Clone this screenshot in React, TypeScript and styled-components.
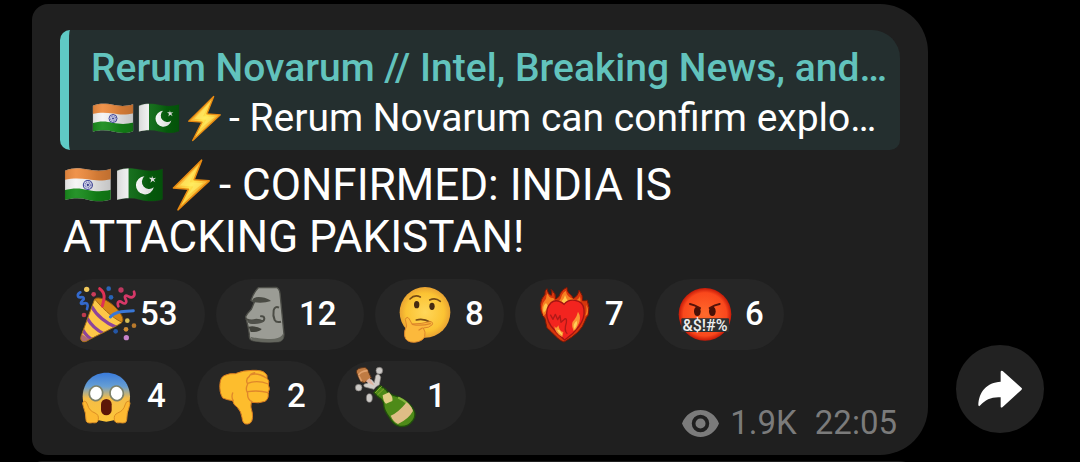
import React from "react";
import styled, { createGlobalStyle } from "styled-components";

const GlobalStyle = createGlobalStyle`
  * { box-sizing: border-box; }
  body {
    margin: 0;
    background: #000;
    color: #fff;
    font-family: Roboto, "Noto Sans", sans-serif;
  }
`;

const Chat = styled.main`
  height: 100vh;
  overflow: hidden;
  display: flex;
  flex-direction: column;
  gap: 6px;
  padding: 4px 36px 0 32px;
`;

const MessageRow = styled.div`
  display: flex;
  align-items: flex-end;
  gap: 28px;
  flex: none;
`;

const Bubble = styled.article`
  flex: 1;
  min-width: 0;
  padding: 26px 28px 23px;
  border-radius: 16px 48px 48px 16px;
  background: #1f1f1f;
`;

const NextBubble = styled.div`
  flex: none;
  height: 60px;
  margin-right: 116px;
  border-radius: 16px 48px 48px 16px;
  background: #1f1f1f;
`;

const Reply = styled.blockquote`
  margin: 0;
  padding: 13px 8px 7px 22px;
  border-left: 9px solid #5fcac5;
  border-radius: 10px 28px 10px 10px;
  background: #242f2f;
  line-height: 50px;
  font-size: 39px;
  white-space: nowrap;
`;

const ReplyTitle = styled.div`
  color: #62c3bd;
  font-weight: 500;
`;

const ReplyText = styled.div`
  display: flex;
  align-items: center;
`;

const Body = styled.p`
  margin: 9px 0 16px;
  padding-left: 3px;
  font-size: 44px;
  line-height: 52px;
`;

const TextEmoji = styled.svg<{ $size: number }>`
  width: ${(p) => p.$size}px;
  height: 1em;
  overflow: visible;
  vertical-align: -7px;
`;

const Reactions = styled.div`
  display: flex;
  flex-wrap: wrap;
  gap: 11px;
  margin-left: -3px;
`;

const Reaction = styled.button<{ $wide?: boolean }>`
  display: flex;
  align-items: center;
  gap: ${(p) => (p.$wide ? 4 : 11)}px;
  height: 71px;
  min-width: ${(p) => (p.$wide ? 148 : 129)}px;
  padding: 0 ${(p) => (p.$wide ? 26 : 19)}px 0 19px;
  border: 0;
  border-radius: 36px;
  background: #262626;
  color: #fff;
  font: 500 33px/38px Roboto, "Noto Sans", sans-serif;
`;

const ReactionIcon = styled.svg`
  width: 60px;
  height: 60px;
  overflow: visible;
`;

const Count = styled.span`
  padding-bottom: 2px;
`;

const Meta = styled.div`
  display: flex;
  align-items: center;
  align-self: flex-end;
  margin: 0 3px -10px auto;
  color: #7b7b7b;
  font-size: 33px;
  line-height: 38px;
`;

const EyeIcon = styled.svg`
  width: 37px;
  height: 27px;
  margin-right: 11px;
`;

const Time = styled.time`
  margin-left: 18px;
`;

const ShareButton = styled.button`
  display: grid;
  place-items: center;
  width: 88px;
  height: 88px;
  margin-bottom: 22px;
  padding: 0;
  border: 0;
  border-radius: 50%;
  background: #222;
`;

const FLAG = "M5 31C30 21 46 24 66 28S106 33 127 26V107C106 115 86 113 66 108S26 103 5 109Z";

function Flags({ size, id }: { size: number; id: string }) {
  return (
    <>
      <TextEmoji $size={size} viewBox="0 12 138 114" role="img" aria-label="Flag of India">
        <defs>
          <clipPath id={`flag-${id}`}>
            <path d={FLAG} />
          </clipPath>
          <linearGradient id={`wave-${id}`}>
            <stop offset="0" stopColor="#000" stopOpacity=".12" />
            <stop offset=".25" stopColor="#fff" stopOpacity=".08" />
            <stop offset=".65" stopColor="#000" stopOpacity=".12" />
            <stop offset="1" stopColor="#000" stopOpacity=".22" />
          </linearGradient>
        </defs>
        <g clipPath={`url(#flag-${id})`}>
          <path fill="#f4f4f4" d="M0 0h138v138H0z" />
          <path fill="#ee8a3c" d="M0 0H138V51C106 60 86 57 66 54S26 50 0 56Z" />
          <path fill="#148a18" d="M0 84C30 75 46 78 66 82S106 88 138 79V138H0Z" />
          <circle cx="66" cy="69" r="12" fill="#eceefb" stroke="#3a3f9c" strokeWidth="3" />
          <circle cx="66" cy="69" r="7" fill="none" stroke="#6a6eb8" strokeWidth="5" strokeDasharray="2 2" />
          <circle cx="66" cy="69" r="3" fill="#30358f" />
          <path fill={`url(#wave-${id})`} d="M0 0h138v138H0z" />
        </g>
        <path d={FLAG} fill="none" stroke="#333" strokeOpacity=".3" strokeWidth="2" />
      </TextEmoji>
      <TextEmoji $size={size} viewBox="0 12 138 114" role="img" aria-label="Flag of Pakistan">
        <g clipPath={`url(#flag-${id})`}>
          <path fill="#05650c" d="M0 0h138v138H0z" />
          <path fill="#efefef" d="M0 0h36v138H0z" />
          <path fill="#fff" d="M78 46A24 24 0 1 0 103 75A19 19 0 1 1 78 46Z" />
          <path fill="#fff" d="M98 44l3 7 8-1-6 5 4 7-7-4-6 5 2-8-6-5 8 0Z" />
          <path fill={`url(#wave-${id})`} d="M0 0h138v138H0z" />
        </g>
        <path d={FLAG} fill="none" stroke="#333" strokeOpacity=".3" strokeWidth="2" />
      </TextEmoji>
      <TextEmoji $size={size} viewBox="0 12 138 114" role="img" aria-label="Lightning">
        <defs>
          <linearGradient id={`bolt-${id}`} x1="0" y1="0" x2="1" y2="1">
            <stop offset=".2" stopColor="#f79a24" />
            <stop offset=".5" stopColor="#ffe54e" />
            <stop offset=".85" stopColor="#f28a16" />
          </linearGradient>
        </defs>
        <path
          d="M92 3L17 77L57 80L29 135L112 58L72 55Z"
          fill={`url(#bolt-${id})`}
          stroke="#e88a12"
          strokeWidth="4"
          strokeLinejoin="round"
        />
        <path d="M80 22L34 70L70 73L53 99L96 64L60 62Z" fill="#fff06a" opacity=".6" />
      </TextEmoji>
    </>
  );
}

function Party() {
  return (
    <ReactionIcon viewBox="78 42 180 180" aria-hidden="true">
      <defs>
        <clipPath id="cone">
          <path d="M134 84C152 106 184 139 216 154C199 168 145 190 109 211C98 215 89 208 93 196Z" />
        </clipPath>
      </defs>
      <path d="M134 84C145 74 178 88 200 113C219 134 224 150 213 156C190 153 133 104 134 84Z" fill="#d88a16" stroke="#8d5812" strokeWidth="3" />
      <g clipPath="url(#cone)">
        <path fill="#fdc748" d="M80 70h150v150H80z" />
        <path fill="none" stroke="#8d449b" strokeWidth="10" d="M124 105C139 133 169 158 199 169M111 141C122 160 142 179 163 189M97 174C105 189 117 202 130 207" />
        <path fill="#b26b72" d="M90 186L122 207L100 221L86 210Z" />
      </g>
      <path d="M134 84C152 106 184 139 216 154C199 168 145 190 109 211C98 215 89 208 93 196Z" fill="none" stroke="#a56d18" strokeWidth="3" />
      <g fill="none" strokeLinecap="round" strokeWidth="9">
        <path stroke="#df3154" d="M149 53C168 66 163 82 157 105" />
        <path stroke="#3977d6" d="M181 138C198 119 220 123 250 119" />
        <path stroke="#3369cc" strokeWidth="8" d="M91 64C80 69 82 80 92 79C103 77 104 84 97 89C89 98 93 101 103 97C112 94 116 102 111 114" />
        <path stroke="#d63868" strokeWidth="8" d="M205 106C200 94 207 87 216 94C225 101 231 96 228 87C221 75 226 71 235 76C248 84 257 74 252 62" />
      </g>
      <circle cx="110" cy="55" r="8" fill="#efc75a" />
      <circle cx="131" cy="70" r="7" fill="#c93c5a" />
      <circle cx="176" cy="53" r="7" fill="#2864b6" />
      <circle cx="183" cy="79" r="7" fill="#2864b6" />
      <circle cx="213" cy="57" r="8" fill="#bd385f" />
      <circle cx="102" cy="132" r="7" fill="#bd3b4d" />
      <circle cx="232" cy="149" r="7" fill="#d7bd55" />
      <circle cx="252" cy="164" r="7" fill="#b8792c" />
      <circle cx="228" cy="175" r="7" fill="#cf8c32" />
      <circle cx="197" cy="181" r="7" fill="#2456a5" />
      <circle cx="229" cy="200" r="8" fill="#c783ca" />
    </ReactionIcon>
  );
}

function Moai() {
  return (
    <ReactionIcon viewBox="75 42 180 180" aria-hidden="true">
      <path d="M145 50L198 49Q208 51 210 67L222 190Q222 207 208 212Q166 216 128 209Q116 206 118 190L115 171L112 158L107 137Q112 127 124 115L133 94L123 88Q132 62 145 50Z" fill="#9b9c95" stroke="#4d4e48" strokeWidth="4" strokeLinejoin="round" />
      <path d="M121 197Q155 207 194 203Q214 200 219 188L220 202Q214 212 202 212Q152 215 127 208Z" fill="#65675f" />
      <path d="M126 88Q134 75 155 79Q174 82 183 90Q161 98 132 94Z" fill="#494a43" />
      <path d="M110 145Q123 151 139 146Q151 147 156 150Q162 151 163 143Q162 134 153 136" fill="none" stroke="#4b4c45" strokeWidth="6" strokeLinecap="round" />
      <path d="M112 149Q138 144 163 151Q151 161 126 159Q113 157 112 149Z" fill="#50514a" />
      <path d="M116 167Q136 163 155 174Q148 184 122 183Z" fill="#41423b" />
      <path d="M207 110Q195 104 191 118Q188 134 194 147Q199 156 213 152" fill="none" stroke="#4c4d46" strokeWidth="6" />
    </ReactionIcon>
  );
}

function Thinking() {
  return (
    <ReactionIcon viewBox="72 42 180 180" aria-hidden="true">
      <defs>
        <radialGradient id="think">
          <stop offset="0" stopColor="#ffd75a" />
          <stop offset=".75" stopColor="#fbc333" />
          <stop offset="1" stopColor="#e9a332" />
        </radialGradient>
      </defs>
      <circle cx="165" cy="124" r="76" fill="url(#think)" />
      <ellipse cx="140" cy="101" rx="8" ry="11" fill="#462b12" />
      <ellipse cx="186" cy="106" rx="8" ry="11" fill="#462b12" />
      <path d="M120 84Q134 69 151 78M179 87Q196 79 211 91M139 147Q160 141 181 154" fill="none" stroke="#764b16" strokeWidth="5" strokeLinecap="round" />
      <path d="M106 145Q111 134 118 144L126 159Q154 159 180 152Q190 152 187 161Q178 171 160 171Q168 183 164 197Q158 211 133 214Q107 214 104 195Q101 181 110 165Z" fill="#fcb93c" stroke="#dc862b" strokeWidth="3" />
      <path d="M127 160Q152 166 181 158M147 177L157 171" fill="none" stroke="#dc862b" strokeWidth="4" strokeLinecap="round" />
    </ReactionIcon>
  );
}

function FireHeart() {
  return (
    <ReactionIcon viewBox="72 42 180 180" aria-hidden="true">
      <path d="M162 213C143 207 131 187 111 171Q108 158 105 143Q90 126 91 101Q93 83 105 70Q103 58 111 53Q114 70 124 73Q128 65 123 55Q139 67 137 84Q148 80 151 67Q158 54 171 49Q171 65 184 73L190 82Q204 76 207 57Q220 73 218 89Q229 90 231 87Q241 109 235 132Q229 137 225 150Q214 185 162 213Z" fill="#d8360c" stroke="#7a1707" strokeWidth="3" />
      <path d="M101 136Q88 105 108 83Q109 71 113 67Q116 82 130 81L139 95L113 120ZM143 94Q155 83 156 72Q160 63 168 59Q169 74 183 81L198 88Q208 84 209 75Q214 88 209 97L192 91L162 101ZM225 134Q233 123 228 101Q239 118 230 132Z" fill="#f77f22" />
      <path d="M101 125Q96 106 108 96Q114 101 113 111ZM155 91Q163 83 165 72Q169 86 177 91L162 97Z" fill="#ffc64c" />
      <path d="M162 100Q174 85 195 88Q220 91 222 116Q225 142 207 166Q189 190 164 207Q142 190 123 165Q105 139 112 113Q124 83 148 91Q156 94 162 100Z" fill="#f3241f" stroke="#a31512" strokeWidth="4" />
      <path d="M121 131L129 145L136 130L143 146L150 134L153 154L165 143Q171 142 169 155Q161 179 172 188" fill="none" stroke="#b01a18" strokeWidth="4" strokeLinejoin="round" />
      <path d="M191 180Q180 158 194 145Q201 135 204 122Q216 140 204 162Q200 174 191 180ZM157 198Q134 187 133 165Q139 176 145 163Q149 183 160 183Z" fill="#fa9634" />
      <path d="M193 174Q187 160 200 149Q204 161 193 174ZM156 193Q146 188 141 176L148 177L157 189Z" fill="#ffd05a" />
    </ReactionIcon>
  );
}

function Cursing() {
  return (
    <ReactionIcon viewBox="72 42 180 180" aria-hidden="true">
      <defs>
        <radialGradient id="rage">
          <stop offset="0" stopColor="#ff6a2c" />
          <stop offset=".82" stopColor="#fa481c" />
          <stop offset="1" stopColor="#c51a08" />
        </radialGradient>
      </defs>
      <circle cx="165" cy="130" r="79" fill="url(#rage)" />
      <ellipse cx="142" cy="121" rx="10" ry="14" fill="#481007" />
      <ellipse cx="187" cy="121" rx="10" ry="14" fill="#481007" />
      <path d="M120 99Q132 101 150 111M209 99Q195 101 179 111" fill="none" stroke="#551309" strokeWidth="6" strokeLinecap="round" />
      <rect x="94" y="142" width="143" height="41" rx="3" fill="#303030" />
      <text x="165" y="179" fill="#eee" fontFamily="Roboto, sans-serif" fontSize="48" fontWeight="500" textAnchor="middle">
        &amp;$!#%
      </text>
    </ReactionIcon>
  );
}

function Screaming() {
  return (
    <ReactionIcon viewBox="78 33 180 180" aria-hidden="true">
      <defs>
        <linearGradient id="scream" x1="0" y1="0" x2="0" y2="1">
          <stop offset="0" stopColor="#397bdb" />
          <stop offset=".28" stopColor="#669ed4" />
          <stop offset=".52" stopColor="#f4bd48" />
          <stop offset="1" stopColor="#fec637" />
        </linearGradient>
      </defs>
      <path d="M169 50C207 50 239 76 240 121C240 162 212 195 169 197C126 195 98 162 98 121C99 76 131 50 169 50Z" fill="url(#scream)" />
      <g fill="#fff" stroke="#7d8169" strokeWidth="5">
        <ellipse cx="138" cy="112" rx="20" ry="22" transform="rotate(15 138 112)" />
        <ellipse cx="200" cy="112" rx="20" ry="22" transform="rotate(-15 200 112)" />
      </g>
      <rect x="153" y="129" width="32" height="49" rx="16" fill="#5c1708" />
      <path d="M102 135Q110 135 113 147Q117 164 135 171Q147 176 145 190Q144 203 128 200Q108 204 108 191Q108 171 100 151Q95 139 102 135Z" fill="#fdb932" stroke="#dc8e25" strokeWidth="3" />
      <path d="M236 135Q228 135 225 147Q221 164 203 171Q191 176 193 190Q194 203 210 200Q230 204 230 191Q230 171 238 151Q243 139 236 135Z" fill="#fdb932" stroke="#dc8e25" strokeWidth="3" />
    </ReactionIcon>
  );
}

function ThumbDown() {
  return (
    <ReactionIcon viewBox="78 33 180 180" aria-hidden="true">
      <path d="M105 58Q119 51 136 53Q159 43 187 43Q215 42 224 50Q234 57 231 67Q240 74 235 87Q242 99 234 110Q238 127 225 136Q207 143 184 139Q180 151 187 171Q191 200 174 204Q158 207 156 185Q154 167 142 154Q130 146 128 134Q112 132 98 126Q87 108 90 82Q92 62 105 58Z" fill="#fdbd2d" stroke="#d87b20" strokeWidth="3" strokeLinejoin="round" />
      <path d="M181 57Q202 48 229 66M173 82Q202 71 235 84M173 107Q206 102 235 110M186 137Q171 130 173 111Q165 101 173 84Q165 70 178 61Q181 53 194 50M130 134Q123 125 128 111" fill="none" stroke="#df872b" strokeWidth="4" strokeLinecap="round" />
    </ReactionIcon>
  );
}

function Champagne() {
  return (
    <ReactionIcon viewBox="78 33 180 180" aria-hidden="true">
      <path d="M132 110L150 89L168 101Q175 115 203 122Q239 137 252 163Q259 177 249 193Q234 214 209 211Q191 208 178 184Q161 162 161 145Q159 130 146 124Z" fill="#4e8a18" stroke="#204f0b" strokeWidth="4" strokeLinejoin="round" />
      <path d="M207 126Q230 136 242 156" fill="none" stroke="#88b63e" strokeWidth="7" strokeLinecap="round" />
      <path d="M182 179Q202 173 230 139Q245 151 249 165Q236 189 204 204Q190 198 182 179Z" fill="#dfbd86" />
      <path d="M158 118L177 109Q190 123 187 135L168 143Q160 139 158 118Z" fill="#e3cf87" />
      <path d="M135 111L155 91M142 117L162 98" stroke="#85a82d" strokeWidth="3" />
      <path d="M132 100L108 94Q98 92 103 84L113 82L111 68L125 71L133 80L137 59Q147 49 152 64L148 86L137 93Z" fill="#d2cdc8" stroke="#8e8984" strokeWidth="2" />
      <path d="M79 48Q80 36 98 35Q110 32 114 44L124 66L103 80Q92 80 86 65Z" fill="#bf7b43" stroke="#5b3419" strokeWidth="3" />
      <path d="M85 58Q91 46 113 44M95 76L87 60" fill="none" stroke="#dfa06c" strokeWidth="5" />
      <path d="M107 76L119 66L133 89Z" fill="#e0b4a0" />
      <g fill="#ccc9c6" stroke="#77736f" strokeWidth="2">
        <circle cx="148" cy="44" r="10" />
        <circle cx="86" cy="95" r="10" />
        <ellipse cx="118" cy="126" rx="9" ry="13" />
      </g>
    </ReactionIcon>
  );
}

const reactions = [
  { name: "Party popper", Icon: Party, count: 53 },
  { name: "Moai", Icon: Moai, count: 12 },
  { name: "Thinking face", Icon: Thinking, count: 8 },
  { name: "Heart on fire", Icon: FireHeart, count: 7 },
  { name: "Cursing face", Icon: Cursing, count: 6 },
  { name: "Screaming face", Icon: Screaming, count: 4 },
  { name: "Thumbs down", Icon: ThumbDown, count: 2 },
  { name: "Champagne", Icon: Champagne, count: 1 },
];

export default function App() {
  return (
    <>
      <GlobalStyle />
      <Chat>
        <MessageRow>
          <Bubble>
            <Reply>
              <ReplyTitle>Rerum Novarum // Intel, Breaking News, and…</ReplyTitle>
              <ReplyText>
                <Flags size={46} id="reply" />
                <span>- Rerum Novarum can confirm explo…</span>
              </ReplyText>
            </Reply>
            <Body>
              <Flags size={52} id="body" />- CONFIRMED: INDIA IS ATTACKING PAKISTAN!
            </Body>
            <Reactions>
              {reactions.map(({ name, Icon, count }) => (
                <Reaction key={name} type="button" $wide={count > 9} aria-label={`${name} ${count}`}>
                  <Icon />
                  <Count>{count}</Count>
                </Reaction>
              ))}
              <Meta>
                <EyeIcon viewBox="33 208 110 80" role="img" aria-label="Views">
                  <path
                    fill="currentColor"
                    fillRule="evenodd"
                    d="M33 248C43 222 65 208 88 208S133 222 143 248C133 274 111 288 88 288S43 274 33 248ZM88 222A26 26 0 1 0 88 274A26 26 0 1 0 88 222ZM88 233A15 15 0 1 1 88 263A15 15 0 1 1 88 233Z"
                  />
                </EyeIcon>
                <span>1.9K</span>
                <Time dateTime="22:05">22:05</Time>
              </Meta>
            </Reactions>
          </Bubble>
          <ShareButton type="button" aria-label="Share">
            <svg width="44" height="38" viewBox="924 88 132 114" aria-hidden="true">
              <path
                fill="#fff"
                d="M992 123V93Q993 88 998 91L1054 141Q1058 144 1054 148L998 199Q993 203 992 198V170C966 168 946 177 931 194Q927 199 925 194C926 153 951 125 992 123Z"
              />
            </svg>
          </ShareButton>
        </MessageRow>
        <NextBubble />
      </Chat>
    </>
  );
}
